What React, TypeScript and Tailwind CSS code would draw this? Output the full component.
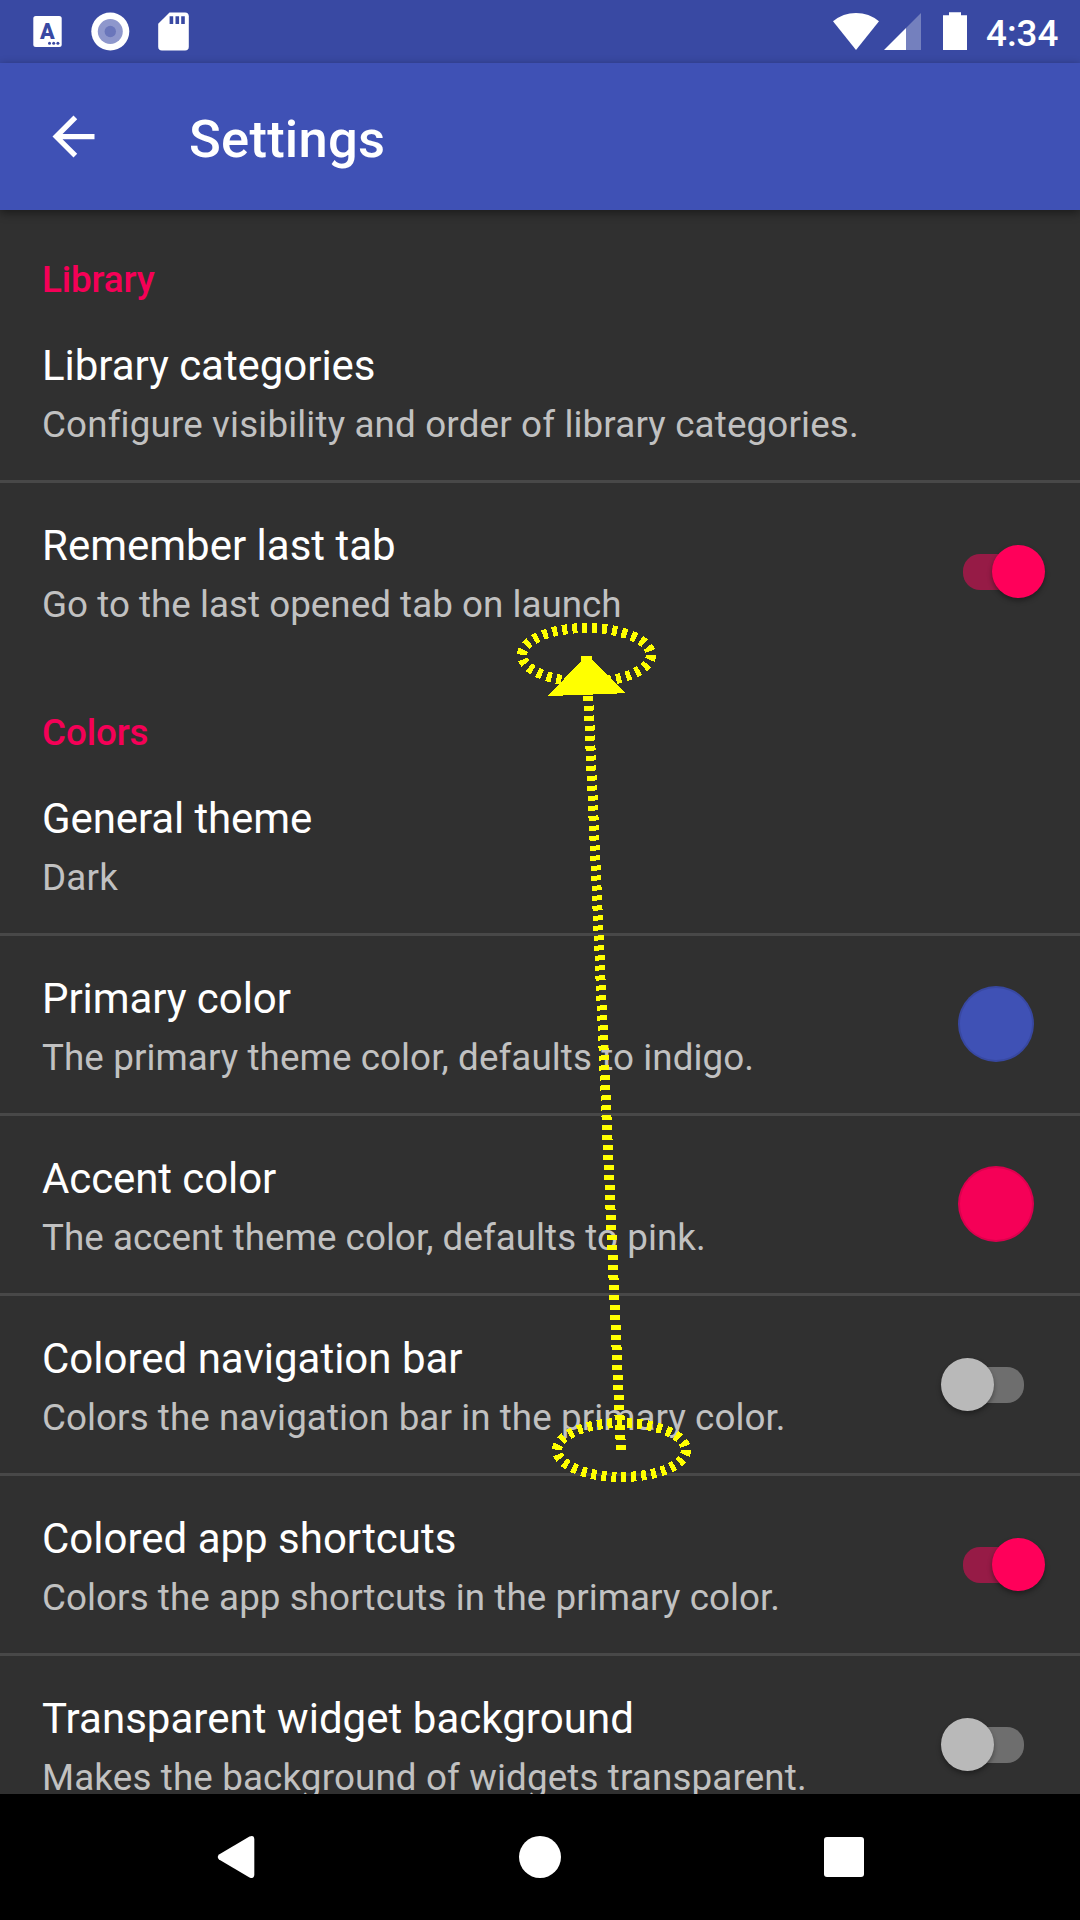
import type { ReactNode } from "react";

function StatusBar() {
  return (
    <div className="flex h-[63px] items-start justify-between bg-[#3949a3]">
      <div className="flex">
        <svg width="200" height="63" viewBox="0 0 200 63" fill="white">
          <rect x="33.3" y="16" width="28.4" height="31" rx="2.5" />
          <text x="47.3" y="38.6" textAnchor="middle" fill="#3949a3" className="text-[21.5px] font-black">A</text>
          <circle cx="49.5" cy="43.2" r="1.5" fill="#3949a3" />
          <circle cx="53.7" cy="43.2" r="1.5" fill="#3949a3" />
          <circle cx="57.9" cy="43.2" r="1.5" fill="#3949a3" />
          <circle cx="110.3" cy="31.5" r="19" />
          <circle cx="110.3" cy="31.5" r="12.5" fill="#8e97cc" />
          <circle cx="110.3" cy="31.5" r="5.7" fill="#6a76bb" />
          <path d="M169.5 12.5 H185 Q188.8 12.5 188.8 16.3 V46.7 Q188.8 50.5 185 50.5 H162 Q158.2 50.5 158.2 46.7 V23.8 Z" />
          <path d="M169.6 16.3 h3.6 v7.8 h-3.6z M175.5 16.3 h3.6 v7.8 h-3.6z M181.2 16.3 h3.6 v7.8 h-3.6z" fill="#3949a3" />
        </svg>
      </div>
      <div className="flex">
        <svg width="156" height="63" viewBox="830 0 156 63" fill="white">
          <path d="M833 21.3 Q843 13 856 13 Q869 13 879 21.3 L856 50 Z" />
          <path d="M921 13 V50 H906 V28 Z" fillOpacity="0.3" />
          <path d="M906 28 V50 H884 Z" />
          <path d="M949 12.3 h12 v3 h6 v34.7 h-24 v-34.7 h6 z" />
        </svg>
        <div className="w-[94px] pt-[12px] text-[36.75px] leading-[43px] font-medium text-white">4:34</div>
      </div>
    </div>
  );
}

function AppBar() {
  return (
    <div className="relative z-10 flex h-[147px] items-center bg-[#3f51b5] pl-[42px] shadow-[0_3px_9px_rgba(0,0,0,0.45)]">
      <svg width="63" height="63" viewBox="0 0 24 24" fill="white">
        <path d="M20 11H7.83l5.59-5.59L12 4l-8 8 8 8 1.41-1.41L7.83 13H20v-2z" />
      </svg>
      <h1 className="ml-[84px] pt-[4px] text-[52.5px] leading-[62px] font-medium tracking-[0.25px] text-white">Settings</h1>
    </div>
  );
}

function Section({ title, children }: { title: string; children: ReactNode }) {
  return (
    <section>
      <h2 className="h-[93px] pt-[48px] pl-[42px] text-[36.75px] leading-[43px] font-medium tracking-[-0.1px] text-[#f50057]">{title}</h2>
      {children}
    </section>
  );
}

function Switch({ on }: { on?: boolean }) {
  return (
    <div className={`relative mr-[56.5px] h-[36px] w-[61px] rounded-[17px] ${on ? "bg-[#961b46]" : "bg-[#6e6e6e]"}`}>
      <div
        className={`absolute top-[-9px] size-[53px] rounded-full shadow-[0_3px_5px_rgba(0,0,0,0.35)] ${
          on ? "left-[29.5px] bg-[#ff005a]" : "left-[-21.5px] bg-[#b9b9b9]"
        }`}
      />
    </div>
  );
}

function Swatch({ color }: { color: string }) {
  return <div className={`mr-[46px] mb-[2px] size-[76px] rounded-full border-[2px] border-black/10 ${color}`} />;
}

interface RowProps {
  title: string;
  summary: string;
  tracking?: string;
  titleTracking?: string;
  last?: boolean;
  children?: ReactNode;
}

function Row({ title, summary, tracking = "", titleTracking = "", last, children }: RowProps) {
  return (
    <div className={`flex h-[180px] items-center justify-between border-b-[3px] ${last ? "border-transparent" : "border-[#484848]"}`}>
      <div className="h-full pt-[38px] pl-[42px] whitespace-nowrap">
        <div className={`text-[42px] leading-[50px] text-white ${titleTracking}`}>{title}</div>
        <div className={`mt-[12px] text-[36.75px] leading-[43px] text-[#c1c1c1] [font-variant-ligatures:common-ligatures] ${tracking}`}>{summary}</div>
      </div>
      {children}
    </div>
  );
}

function GestureOverlay() {
  return (
    <svg className="pointer-events-none absolute inset-0 z-20" width="1080" height="1920" viewBox="0 0 1080 1920" fill="none" stroke="#ffff00" strokeWidth="10" strokeDasharray="5 5" shapeRendering="crispEdges">
      <ellipse cx="586.5" cy="655" rx="64.5" ry="27" />
      <ellipse cx="621.5" cy="1450" rx="64.5" ry="27" />
      <line x1="621" y1="1450" x2="586.5" y2="656" />
      <path d="M581 656 H591 V659 L626 693 L608 694 L548 696 L581 661 Z" fill="#ffff00" stroke="none" />
    </svg>
  );
}

export default function App() {
  return (
    <div className="relative flex h-[1920px] w-[1080px] flex-col overflow-hidden bg-[#303030] font-[Roboto,sans-serif]">
      <StatusBar />
      <AppBar />
      <main className="min-h-0 flex-1 overflow-hidden">
        <Section title="Library">
          <Row title="Library categories" titleTracking="tracking-[-0.05px]" summary="Configure visibility and order of library categories." tracking="tracking-[0.16px]" />
          <Row title="Remember last tab" summary="Go to the last opened tab on launch" tracking="tracking-[0.03px]" last>
            <Switch on />
          </Row>
        </Section>
        <Section title="Colors">
          <Row title="General theme" titleTracking="tracking-[-0.1px]" summary="Dark" tracking="tracking-[0.2px]" />
          <Row title="Primary color" titleTracking="tracking-[-0.08px]" summary="The primary theme color, defaults to indigo." tracking="tracking-[0.1px]">
            <Swatch color="bg-[#3f51b5]" />
          </Row>
          <Row title="Accent color" titleTracking="tracking-[-0.1px]" summary="The accent theme color, defaults to pink." tracking="tracking-[0.05px]">
            <Swatch color="bg-[#f50057]" />
          </Row>
          <Row title="Colored navigation bar" summary="Colors the navigation bar in the primary color." tracking="tracking-[0.08px]">
            <Switch />
          </Row>
          <Row title="Colored app shortcuts" summary="Colors the app shortcuts in the primary color." tracking="tracking-[0.08px]">
            <Switch on />
          </Row>
          <Row title="Transparent widget background" titleTracking="tracking-[0.04px]" summary="Makes the background of widgets transparent." tracking="tracking-[0.14px]">
            <Switch />
          </Row>
        </Section>
      </main>
      <nav className="flex h-[126px] shrink-0 items-center justify-between bg-black pr-[216px] pl-[217px]">
        <svg width="38" height="42" viewBox="0 0 38 42" fill="white">
          <path d="M32.5 0.6 Q37.3 -1.2 37.3 3.5 V38.5 Q37.3 43.2 32.5 41.4 L2 23.5 Q-0.5 21 2 18.5 Z" />
        </svg>
        <div className="size-[42px] rounded-full bg-white" />
        <div className="size-[40px] rounded-[3px] bg-white" />
      </nav>
      <GestureOverlay />
    </div>
  );
}
